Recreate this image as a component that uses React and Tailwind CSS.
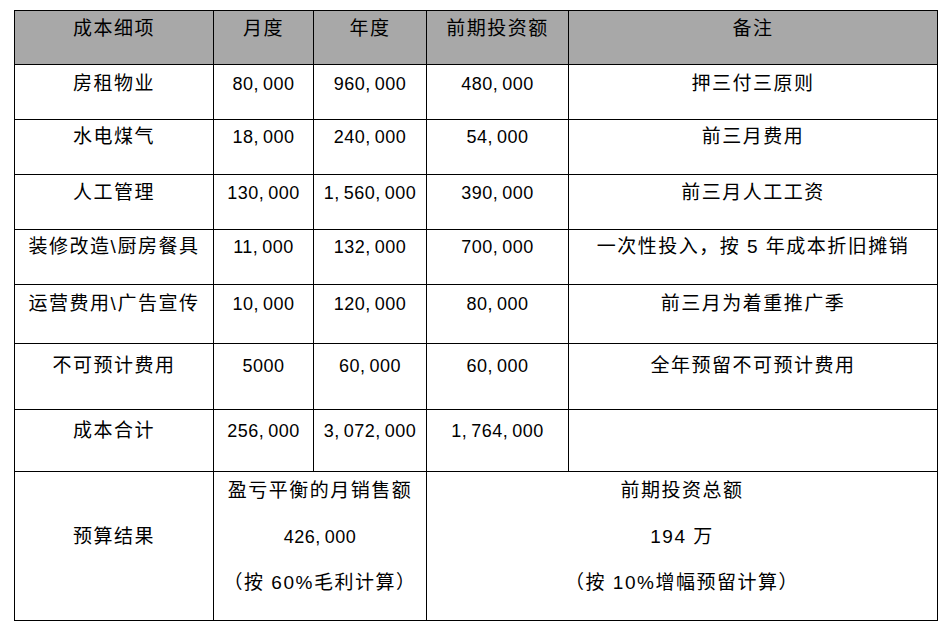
import React from "react";

const rows = [
  { name: "房租物业", m: "80,000", y: "960,000", inv: "480,000", note: "押三付三原则", h: "h-[55px]", pt: "pt-[7px]" },
  { name: "水电煤气", m: "18,000", y: "240,000", inv: "54,000", note: "前三月费用", h: "h-[55px]", pt: "pt-[5px]" },
  { name: "人工管理", m: "130,000", y: "1,560,000", inv: "390,000", note: "前三月人工工资", h: "h-[55px]", pt: "pt-[6px]" },
  { name: "装修改造\\厨房餐具", m: "11,000", y: "132,000", inv: "700,000", note: "一次性投入，按 5 年成本折旧摊销", h: "h-[55px]", pt: "pt-[5px]" },
  { name: "运营费用\\广告宣传", m: "10,000", y: "120,000", inv: "80,000", note: "前三月为着重推广季", h: "h-[59px]", pt: "pt-[7px]" },
  { name: "不可预计费用", m: "5000", y: "60,000", inv: "60,000", note: "全年预留不可预计费用", h: "h-[66px]", pt: "pt-[10px]" },
  { name: "成本合计", m: "256,000", y: "3,072,000", inv: "1,764,000", note: "", h: "h-[62px]", pt: "pt-[9px]" },
];

const cell = "border border-black align-top text-center p-0";
const cjk = "text-[19px] tracking-[1.5px]";
const num = "tracking-[0.5px]";

// comma in the sheet's number font is wide
const Num = ({ v }) => {
  const parts = v.split(",");
  return (
    <span>
      {parts.map((p, i) => (
        <React.Fragment key={i}>
          {i > 0 && <span className="mr-[4px]">,</span>}
          {p}
        </React.Fragment>
      ))}
    </span>
  );
};

export default function App() {
  return (
    <div
      className="w-[947px] h-[630px] bg-white text-black pt-[10px] pl-[14px]"
      style={{ fontFamily: '"Liberation Sans", "Noto Sans CJK SC", sans-serif' }}
    >
      <table className="border-collapse table-fixed w-[923px] text-[18px] leading-[24px]">
        <colgroup>
          <col className="w-[199px]" />
          <col className="w-[100px]" />
          <col className="w-[113px]" />
          <col className="w-[142px]" />
          <col className="w-[369px]" />
        </colgroup>
        <thead>
          <tr className="h-[54px] bg-[#a8a8a8]">
            <th className={`${cell} ${cjk} font-normal pt-[6px]`}>成本细项</th>
            <th className={`${cell} ${cjk} font-normal pt-[6px]`}>月度</th>
            <th className={`${cell} ${cjk} font-normal pt-[6px]`}>年度</th>
            <th className={`${cell} ${cjk} font-normal pt-[6px]`}>前期投资额</th>
            <th className={`${cell} ${cjk} font-normal pt-[6px]`}>备注</th>
          </tr>
        </thead>
        <tbody>
          {rows.map((r) => (
            <tr key={r.name} className={r.h}>
              <td className={`${cell} ${cjk} ${r.pt}`}>{r.name}</td>
              <td className={`${cell} ${num} ${r.pt}`}><Num v={r.m} /></td>
              <td className={`${cell} ${num} ${r.pt}`}><Num v={r.y} /></td>
              <td className={`${cell} ${num} ${r.pt}`}><Num v={r.inv} /></td>
              <td className={`${cell} ${cjk} ${r.pt}`}>{r.note}</td>
            </tr>
          ))}
          <tr className="h-[149px]">
            <td className={`${cell} ${cjk} pt-[53px]`}>预算结果</td>
            <td colSpan={2} className={`${cell} ${cjk} pt-[7px]`}>
              <div className="flex flex-col gap-[22px]">
                <span>盈亏平衡的月销售额</span>
                <span className="text-[18px] tracking-[0.5px]"><Num v="426,000" /></span>
                <span>（按 60%毛利计算）</span>
              </div>
            </td>
            <td colSpan={2} className={`${cell} ${cjk} pt-[7px]`}>
              <div className="flex flex-col gap-[22px]">
                <span>前期投资总额</span>
                <span>194 万</span>
                <span>（按 10%增幅预留计算）</span>
              </div>
            </td>
          </tr>
        </tbody>
      </table>
    </div>
  );
}
